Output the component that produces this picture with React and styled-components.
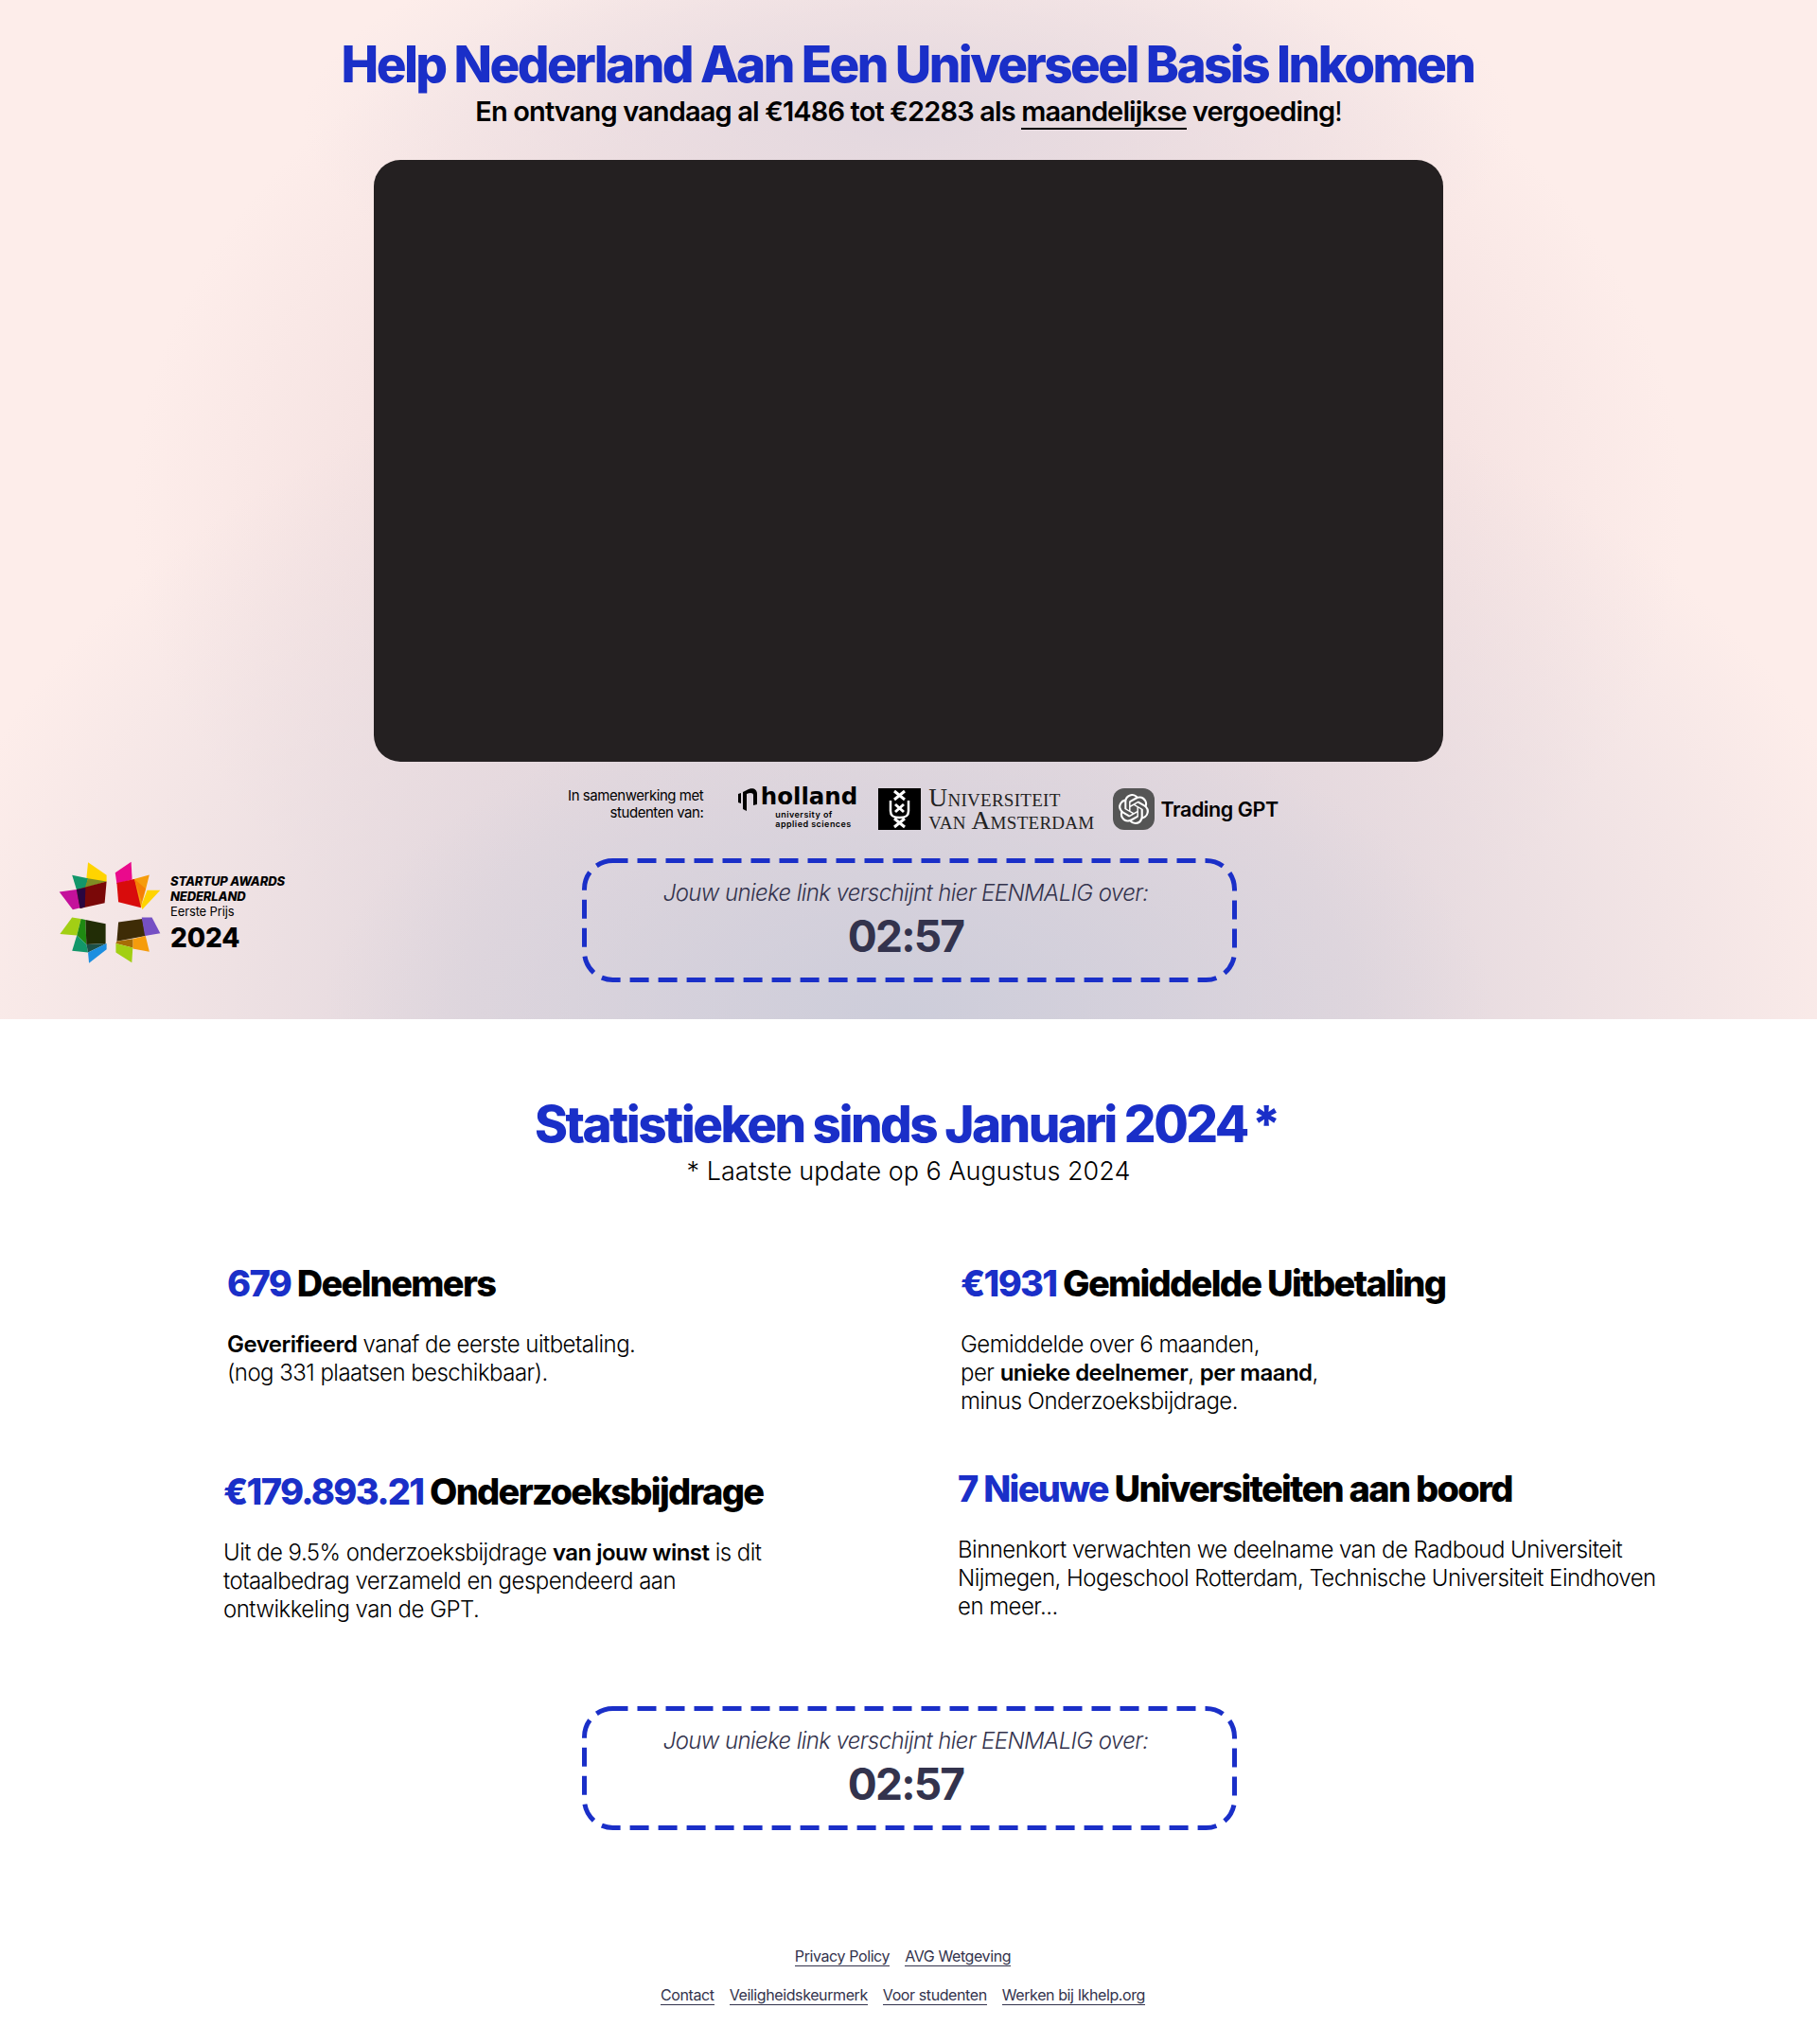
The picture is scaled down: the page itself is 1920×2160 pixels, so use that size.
import styled, { createGlobalStyle } from "styled-components";
import { SiOpenai } from "react-icons/si";

const BLUE = "#1a2fc8";
const INK = "#33334d";

const GlobalStyle = createGlobalStyle`
  body {
    margin: 0;
    background: #fff;
    font-family: Inter, "Liberation Sans", sans-serif;
    color: #000;
  }
`;

const Hero = styled.section`
  position: relative;
  height: 1077px;
  box-sizing: border-box;
  padding-top: 39px;
  display: flex;
  flex-direction: column;
  align-items: center;
  background:
    radial-gradient(ellipse 620px 340px at 50% 100%, #cdcdda 0%, rgba(214, 208, 220, 0) 100%),
    radial-gradient(ellipse 1050px 740px at 50% 100%, #dfd5dd 0%, #e3d8de 45%, rgba(230, 218, 222, 0) 100%),
    radial-gradient(ellipse 640px 230px at 50% 12%, #e3d8df 0%, rgba(228, 216, 224, 0) 100%),
    radial-gradient(ellipse 820px 620px at 50% 50%, #efdcdf 0%, #f3e0e0 60%, rgba(243, 224, 224, 0) 100%),
    #fdedea;
`;

const Title = styled.h1`
  margin: 0;
  padding-right: 2px;
  font-size: 53px;
  line-height: 58px;
  font-weight: 800;
  letter-spacing: -0.049em;
  color: ${BLUE};
  text-align: center;
`;

const Subtitle = styled.p`
  margin: 4px 0 0;
  font-size: 29px;
  line-height: 34px;
  font-weight: 600;
  letter-spacing: -0.03em;
  text-align: center;

  u {
    text-decoration: none;
    border-bottom: 2px solid #000;
  }
  span {
    font-weight: 400;
  }
`;

const Video = styled.div`
  width: 1130px;
  height: 636px;
  margin-top: 34px;
  background: #242021;
  border-radius: 28px;
`;

const Partners = styled.div`
  display: flex;
  align-items: center;
  height: 50px;
  margin-top: 25px;
  margin-left: 14px;
`;

const PartnerNote = styled.p`
  margin: 0 32px 10px 0;
  width: 160px;
  font-size: 15px;
  line-height: 18px;
  letter-spacing: -0.03em;
  text-align: right;
`;

const Inholland = styled.div`
  display: flex;
  flex-direction: column;
  align-items: flex-end;
  width: 131px;
  margin: 0 22px 4px 0;
`;

const InhollandName = styled.div`
  display: flex;
  align-items: flex-start;
  gap: 1px;
  height: 28px;
  font-family: "DejaVu Sans", Inter, sans-serif;
  font-size: 24.500px;
  line-height: 24px;
  font-weight: 700;
`;

const InhollandSub = styled.div`
  font-size: 9px;
  line-height: 10px;
  font-weight: 600;
  letter-spacing: 0.05em;
  width: 87px;
  margin-top: -2px;
`;

const Uva = styled.div`
  display: flex;
  align-items: center;
  gap: 8px;
  margin-right: 19px;
`;

const UvaCrest = styled.svg`
  width: 45px;
  height: 44px;
  display: block;
`;

const UvaName = styled.div`
  font-family: "Liberation Serif", serif;
  font-variant: small-caps;
  font-size: 27.500px;
  line-height: 24px;
  letter-spacing: 0.01em;
  color: #222;
  white-space: nowrap;
`;

const GptBadge = styled.div`
  display: flex;
  align-items: center;
  gap: 7px;
  font-size: 21.500px;
  font-weight: 600;
  letter-spacing: -0.02em;
`;

const GptIcon = styled.div`
  width: 44px;
  height: 44px;
  border-radius: 12px;
  background: #555;
  color: #fff;
  display: flex;
  align-items: center;
  justify-content: center;
`;

const Award = styled.div`
  position: absolute;
  left: 62px;
  top: 910px;
  display: flex;
  align-items: center;
  gap: 10px;
`;

const AwardMark = styled.svg`
  width: 108px;
  height: 110px;
  display: block;
`;

const AwardText = styled.div`
  font-size: 13px;
  line-height: 16px;
  letter-spacing: -0.01em;

  b {
    display: block;
    font-weight: 800;
    font-style: italic;
  }
  strong {
    display: block;
    font-size: 28px;
    line-height: 34px;
    font-weight: 800;
    margin-top: 3px;
  }
`;

const TimerBox = styled.div`
  position: relative;
  width: 692px;
  height: 131px;
  box-sizing: border-box;
  color: ${INK};
  text-align: center;
  padding: 22px 8px 0 0;
  margin-top: ${(p) => p.$top}px;
  margin-left: 2px;
`;

const TimerFrame = styled.svg`
  position: absolute;
  inset: 0;
  width: 100%;
  height: 100%;
  fill: none;
  stroke: ${BLUE};
  stroke-width: 5;
  stroke-dasharray: 20 10;
  stroke-dashoffset: 4;
`;

const TimerLabel = styled.div`
  font-size: 24px;
  line-height: 30px;
  font-weight: 300;
  font-style: italic;
  letter-spacing: -0.025em;
`;

const TimerValue = styled.div`
  font-size: 46px;
  line-height: 56px;
  font-weight: 700;
  letter-spacing: -0.04em;
  margin-top: 2px;
`;

const Stats = styled.section`
  display: flex;
  flex-direction: column;
  align-items: center;
  padding-top: 80px;
`;

const StatsTitle = styled.h2`
  margin: 0;
  padding-right: 4px;
  font-size: 53px;
  line-height: 62px;
  font-weight: 800;
  letter-spacing: -0.048em;
  color: ${BLUE};

  span {
    margin-left: 5px;
  }
`;

const StatsNote = styled.p`
  margin: 1px 0 0;
  font-size: 27px;
  line-height: 36px;
  font-weight: 300;
  letter-spacing: 0;
`;

const StatGrid = styled.div`
  width: 1920px;
  box-sizing: border-box;
  display: grid;
  grid-template-columns: 776px 1fr;
  padding-left: 236px;
  margin-top: 78px;
`;

const Stat = styled.article`
  height: ${(p) => p.$height}px;
  margin-left: ${(p) => p.$shift || 0}px;
  margin-top: ${(p) => p.$drop || 0}px;
`;

const StatHead = styled.h3`
  margin: 0 0 28px;
  font-size: 38px;
  line-height: 44px;
  font-weight: 800;
  letter-spacing: -0.045em;

  em {
    font-style: normal;
    color: ${BLUE};
  }
`;

const StatText = styled.p`
  margin: 0;
  font-size: 24px;
  line-height: 30px;
  font-weight: 300;
  letter-spacing: -0.022em;

  b {
    font-weight: 600;
  }
`;

const Footer = styled.footer`
  margin-top: 123px;
  padding-right: 12px;
  display: flex;
  flex-direction: column;
  align-items: center;
  gap: 20px;
`;

const FooterRow = styled.nav`
  display: flex;
  gap: 16px;
`;

const FooterLink = styled.a`
  font-size: 16px;
  line-height: 20px;
  color: ${INK};
  border-bottom: 1px solid ${INK};
  letter-spacing: -0.025em;
`;

const InhollandMark = () => (
  <svg width="24" height="28" viewBox="0 0 24 28" fill="#000">
    <path d="M1 9l3-1v11l-3-1zM6 7l4-2v22l-4-2zM10 5c5-3 11-2 11 4v11l-4 1V10c0-2-3-3-7-1z" />
  </svg>
);

const UvaLogo = () => (
  <UvaCrest viewBox="0 0 45 44">
    <rect width="45" height="44" fill="#000" />
    <g stroke="#fff" strokeWidth="3" fill="none">
      <path d="M17 3l11 9M28 3l-11 9M18 17l9 8M27 17l-9 8M17 32l11 9M28 32l-11 9" />
      <path d="M13 13v11c0 6 4 7 9.500 7s9.500-1 9.500-7V13" strokeWidth="2.500" />
    </g>
  </UvaCrest>
);

// coordinates taken from the enlarged reference, blocks overlap so they are drawn back to front
const AwardLogo = () => (
  <AwardMark viewBox="68 64 320 326">
    <polygon points="160,68 218,108 218,128 152,148" fill="#ffd400" />
    <polygon points="110,108 160,118 152,150 124,154" fill="#12976a" />
    <polygon points="160,118 218,128 150,148" fill="#7f8f24" />
    <polygon points="70,160 124,153 137,210 112,216" fill="#c4119b" />
    <polygon points="124,153 218,128 212,195 135,212" fill="#7a0808" />
    <polygon points="124,153 152,148 150,208 135,212" fill="#2a0640" />
    <polygon points="245,100 295,66 298,122 250,135" fill="#ea0a8c" />
    <polygon points="298,122 352,107 340,155 325,210" fill="#f59c0c" />
    <polygon points="250,132 305,120 326,210 255,192" fill="#d80c0c" />
    <polygon points="305,120 340,150 328,190" fill="#f57f05" />
    <polygon points="345,155 386,155 330,215 326,205" fill="#ffd400" />
    <polygon points="110,240 138,245 125,297 72,292" fill="#a2cf14" />
    <polygon points="138,245 152,248 155,325 125,297" fill="#1f8a12" />
    <polygon points="152,248 215,260 215,322 155,325" fill="#222d06" />
    <polygon points="125,297 155,325 160,350 110,345" fill="#12976a" />
    <polygon points="155,325 218,322 160,350" fill="#1c5048" />
    <polygon points="160,350 218,322 218,340 163,383" fill="#1c8fe0" />
    <polygon points="255,255 330,245 340,298 250,315" fill="#3e2c06" />
    <polygon points="328,240 360,240 386,290 338,298" fill="#7550c4" />
    <polygon points="300,308 340,298 352,348 300,338" fill="#f59c0c" />
    <polygon points="250,315 300,308 300,335 247,322" fill="#a66c06" />
    <polygon points="247,322 300,335 297,382 247,350" fill="#a2cf14" />
  </AwardMark>
);

const Timer = ({ top }) => (
  <TimerBox $top={top}>
    <TimerFrame viewBox="0 0 692 131">
      <rect x="2.500" y="2.500" width="687" height="126" rx="30" />
    </TimerFrame>
    <TimerLabel>Jouw unieke link verschijnt hier EENMALIG over:</TimerLabel>
    <TimerValue>02:57</TimerValue>
  </TimerBox>
);

export default function App() {
  return (
    <>
      <GlobalStyle />
      <Hero>
        <Title>Help Nederland Aan Een Universeel Basis Inkomen</Title>
        <Subtitle>
          En ontvang vandaag al €1486 tot €2283 als <u>maandelijkse</u> vergoeding<span>!</span>
        </Subtitle>
        <Video />
        <Partners>
          <PartnerNote>In samenwerking met studenten van:</PartnerNote>
          <Inholland>
            <InhollandName>
              <InhollandMark />
              holland
            </InhollandName>
            <InhollandSub>
              university of
              <br />
              applied sciences
            </InhollandSub>
          </Inholland>
          <Uva>
            <UvaLogo />
            <UvaName>
              <div>Universiteit</div>
              <div>van Amsterdam</div>
            </UvaName>
          </Uva>
          <GptBadge>
            <GptIcon>
              <SiOpenai size={32} />
            </GptIcon>
            Trading GPT
          </GptBadge>
        </Partners>
        <Award>
          <AwardLogo />
          <AwardText>
            <b>STARTUP AWARDS</b>
            <b>NEDERLAND</b>
            Eerste Prijs
            <strong>2024</strong>
          </AwardText>
        </Award>
        <Timer top={27} />
      </Hero>
      <Stats>
        <StatsTitle>
          Statistieken sinds Januari 2024<span>*</span>
        </StatsTitle>
        <StatsNote>* Laatste update op 6 Augustus 2024</StatsNote>
        <StatGrid>
          <Stat $height={220} $shift={4}>
            <StatHead>
              <em>679</em> Deelnemers
            </StatHead>
            <StatText>
              <b>Geverifieerd</b> vanaf de eerste uitbetaling.
              <br />
              (nog 331 plaatsen beschikbaar).
            </StatText>
          </Stat>
          <Stat $height={220} $shift={3}>
            <StatHead>
              <em>€1931</em> Gemiddelde Uitbetaling
            </StatHead>
            <StatText>
              Gemiddelde over 6 maanden,
              <br />
              per <b>unieke deelnemer</b>, <b>per maand</b>,
              <br />
              minus Onderzoeksbijdrage.
            </StatText>
          </Stat>
          <Stat $height={217}>
            <StatHead>
              <em>€179.893.21</em> Onderzoeksbijdrage
            </StatHead>
            <StatText>
              Uit de 9.5% onderzoeksbijdrage <b>van jouw winst</b> is dit
              <br />
              totaalbedrag verzameld en gespendeerd aan
              <br />
              ontwikkeling van de GPT.
            </StatText>
          </Stat>
          <Stat $height={217} $drop={-3}>
            <StatHead>
              <em>7 Nieuwe</em> Universiteiten aan boord
            </StatHead>
            <StatText>
              Binnenkort verwachten we deelname van de Radboud Universiteit
              <br />
              Nijmegen, Hogeschool Rotterdam, Technische Universiteit Eindhoven
              <br />
              en meer...
            </StatText>
          </Stat>
        </StatGrid>
        <Timer top={32} />
        <Footer>
          <FooterRow>
            <FooterLink>Privacy Policy</FooterLink>
            <FooterLink>AVG Wetgeving</FooterLink>
          </FooterRow>
          <FooterRow>
            <FooterLink>Contact</FooterLink>
            <FooterLink>Veiligheidskeurmerk</FooterLink>
            <FooterLink>Voor studenten</FooterLink>
            <FooterLink>Werken bij Ikhelp.org</FooterLink>
          </FooterRow>
        </Footer>
      </Stats>
    </>
  );
}
